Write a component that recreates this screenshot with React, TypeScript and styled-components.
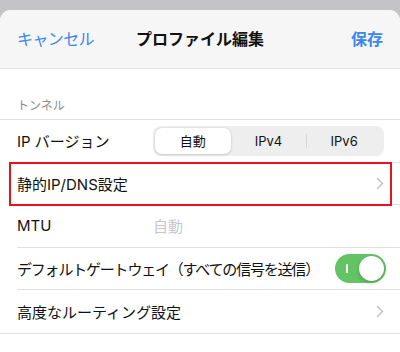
import React from 'react';
import styled, { createGlobalStyle } from 'styled-components';

const GlobalStyle = createGlobalStyle`
  html, body {
    margin: 0;
    padding: 0;
    background: #c4c3c8;
  }
  body {
    font-family: "Inter", "Noto Sans CJK JP", sans-serif;
    -webkit-font-smoothing: antialiased;
  }
`;

const Screen = styled.div`
  width: 400px;
  height: 352px;
  overflow: hidden;
  background: #c4c3c8;
  display: flex;
  flex-direction: column;
`;

/* strip of the page lying behind the sheet */
const Backdrop = styled.div`
  height: 10px;
  flex-shrink: 0;
`;

const Sheet = styled.div`
  flex: 1;
  background: #ffffff;
  border-radius: 11px 11px 0 0;
  overflow: hidden;
  display: flex;
  flex-direction: column;
`;

const NavBar = styled.div`
  height: 59px;
  flex-shrink: 0;
  box-sizing: border-box;
  padding: 0 17px 3px;
  background: #f6f6f6;
  border-bottom: 1px solid #e2e2e4;
  display: grid;
  grid-template-columns: 1fr auto 1fr;
  align-items: center;
`;

const NavButton = styled.span<{ $align: 'left' | 'right' }>`
  font-size: 16px;
  color: #3b86f0;
  justify-self: ${(p) => (p.$align === 'left' ? 'start' : 'end')};
  font-weight: ${(p) => (p.$align === 'right' ? 600 : 400)};
  letter-spacing: ${(p) => (p.$align === 'left' ? '-0.6px' : '0')};
`;

const NavTitle = styled.span`
  font-size: 16px;
  font-weight: 700;
  color: #111;
`;

const SectionHeader = styled.div`
  height: 50px;
  flex-shrink: 0;
  box-sizing: border-box;
  padding: 0 17px 6px;
  display: flex;
  align-items: flex-end;
  font-size: 12px;
  line-height: 14px;
  color: #8e8e93;
`;

const List = styled.div`
  border-top: 1px solid #e0e0e2;
  border-bottom: 1px solid #e0e0e2;
`;

const Row = styled.div<{ $highlight?: boolean; $last?: boolean }>`
  position: relative;
  height: 42.6px;
  box-sizing: border-box;
  margin-left: 17px;
  padding-right: 16px;
  border-bottom: ${(p) => (p.$last ? 'none' : '1px solid #e0e0e2')};
  display: flex;
  align-items: center;
  font-size: 15px;
  color: #111;

  ${(p) =>
    p.$highlight &&
    `
    &::after {
      content: '';
      position: absolute;
      left: -8px;
      right: 8px;
      top: -1px;
      bottom: -2px;
      border: 2px solid #e5141b;
      pointer-events: none;
    }
  `}
`;

const Label = styled.span<{ $fixed?: boolean; $tight?: boolean }>`
  width: ${(p) => (p.$fixed ? '136px' : 'auto')};
  flex-shrink: 0;
  white-space: nowrap;
  letter-spacing: ${(p) => (p.$tight ? '-1.2px' : '0')};
`;

const Value = styled.span`
  color: #c7c7cc;
`;

const Spacer = styled.div`
  flex: 1;
`;

const Segmented = styled.div`
  flex: 1;
  height: 30px;
  box-sizing: border-box;
  padding: 2px;
  background: #eeeeef;
  border-radius: 8px;
  display: grid;
  grid-template-columns: repeat(3, 1fr);
  align-items: stretch;
`;

const Segment = styled.div<{ $active?: boolean; $divider?: boolean }>`
  position: relative;
  display: flex;
  align-items: center;
  justify-content: center;
  font-size: 13px;
  color: #111;
  border-radius: 7px;
  background: ${(p) => (p.$active ? '#ffffff' : 'transparent')};
  box-shadow: ${(p) =>
    p.$active ? '0 1px 3px rgba(0,0,0,0.14), 0 0 0 0.5px rgba(0,0,0,0.05)' : 'none'};

  ${(p) =>
    p.$divider &&
    `
    &::before {
      content: '';
      position: absolute;
      left: 0;
      top: 6px;
      bottom: 6px;
      width: 1px;
      background: #d6d6d8;
    }
  `}
`;

const Switch = styled.div<{ $on: boolean }>`
  position: relative;
  width: 51px;
  height: 29px;
  border-radius: 15px;
  background: ${(p) => (p.$on ? '#62c462' : '#e9e9ea')};
  display: flex;
  align-items: center;
  justify-content: ${(p) => (p.$on ? 'flex-end' : 'flex-start')};
  padding: 0 2px;
  box-sizing: border-box;
  flex-shrink: 0;
  margin-right: -2px;
`;

const SwitchMark = styled.span`
  position: absolute;
  left: 11px;
  top: 10px;
  width: 1.5px;
  height: 9px;
  background: #ffffff;
  border-radius: 1px;
`;

const Knob = styled.span`
  width: 25px;
  height: 25px;
  border-radius: 50%;
  background: #ffffff;
  box-shadow: 0 2px 4px rgba(0, 0, 0, 0.18), 0 0 1px rgba(0, 0, 0, 0.12);
`;

const Chevron = () => (
  <svg width="8" height="13" viewBox="0 0 8 13" fill="none">
    <path d="M1.5 1.5 L6.5 6.5 L1.5 11.5" stroke="#c4c4c7" strokeWidth="1.6" strokeLinecap="round" strokeLinejoin="round" />
  </svg>
);

export default function App() {
  return (
    <>
      <GlobalStyle />
      <Screen>
        <Backdrop />
        <Sheet>
          <NavBar>
            <NavButton $align="left">キャンセル</NavButton>
            <NavTitle>プロファイル編集</NavTitle>
            <NavButton $align="right">保存</NavButton>
          </NavBar>
          <SectionHeader>トンネル</SectionHeader>
          <List>
            <Row>
              <Label $fixed>IP バージョン</Label>
              <Segmented>
                <Segment $active>自動</Segment>
                <Segment>IPv4</Segment>
                <Segment $divider>IPv6</Segment>
              </Segmented>
            </Row>
            <Row $highlight>
              <Label>静的IP/DNS設定</Label>
              <Spacer />
              <Chevron />
            </Row>
            <Row>
              <Label $fixed>MTU</Label>
              <Value>自動</Value>
            </Row>
            <Row>
              <Label $tight>デフォルトゲートウェイ（すべての信号を送信）</Label>
              <Spacer />
              <Switch $on>
                <SwitchMark />
                <Knob />
              </Switch>
            </Row>
            <Row $last>
              <Label>高度なルーティング設定</Label>
              <Spacer />
              <Chevron />
            </Row>
          </List>
        </Sheet>
      </Screen>
    </>
  );
}
